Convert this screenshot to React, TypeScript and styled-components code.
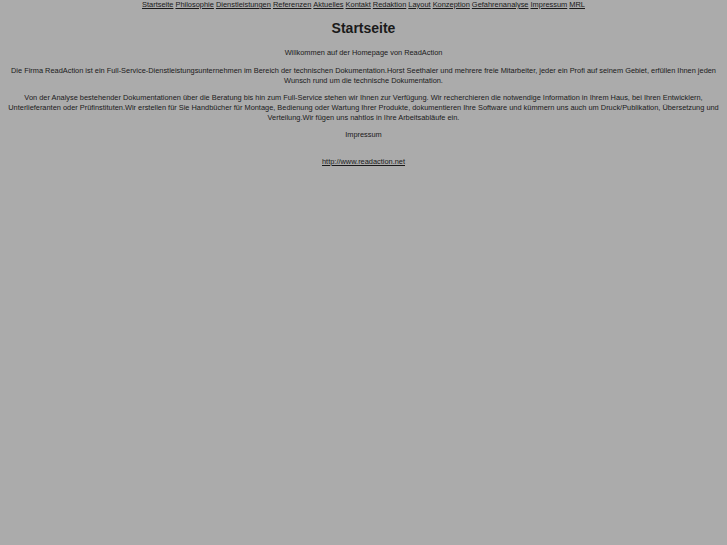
import React from 'react';
import styled, { createGlobalStyle } from 'styled-components';

const Global = createGlobalStyle`
  html, body {
    margin: 0;
    padding: 0;
    background: #ababab;
  }
  body {
    font-family: "Liberation Sans", Arial, sans-serif;
    color: #1a1a1a;
  }
`;

const Page = styled.div`
  display: flex;
  flex-direction: column;
  align-items: center;
  text-align: center;
  padding: 0 4px;
`;

const Nav = styled.nav`
  font-size: 7.45px;
  line-height: 9px;
  display: flex;
  gap: 2px;
`;

const NavLink = styled.a`
  color: #1a1a1a;
  text-decoration: underline;
`;

const Title = styled.h1`
  font-size: 14px;
  font-weight: bold;
  margin: 12px 0 12px;
  line-height: 15px;
`;

const Text = styled.p<{ $gap?: number }>`
  font-size: 7.4px;
  line-height: 10px;
  margin: 0 0 ${p => p.$gap ?? 7}px;
`;

const Link = styled.a`
  color: #1a1a1a;
  font-size: 7.4px;
  text-decoration: underline;
`;

const items = [
  'Startseite', 'Philosophie', 'Dienstleistungen', 'Referenzen', 'Aktuelles', 'Kontakt',
  'Redaktion', 'Layout', 'Konzeption', 'Gefahrenanalyse', 'Impressum', 'MRL',
];

export default function App() {
  return (
    <>
      <Global />
      <Page>
        <Nav>
          {items.map(i => (
            <NavLink key={i} href="#">{i}</NavLink>
          ))}
        </Nav>
        <Title>Startseite</Title>
        <Text $gap={8}>Willkommen auf der Homepage von ReadAction</Text>
        <Text>
          Die Firma ReadAction ist ein Full-Service-Dienstleistungsunternehmen im Bereich der technischen Dokumentation.Horst Seethaler und mehrere freie Mitarbeiter, jeder ein Profi auf seinem Gebiet, erfüllen Ihnen jeden Wunsch rund um die technische Dokumentation.
        </Text>
        <Text>
          Von der Analyse bestehender Dokumentationen über die Beratung bis hin zum Full-Service stehen wir Ihnen zur Verfügung. Wir recherchieren die notwendige Information in Ihrem Haus, bei Ihren Entwicklern, Unterlieferanten oder Prüfinstituten.Wir erstellen für Sie Handbücher für Montage, Bedienung oder Wartung Ihrer Produkte, dokumentieren Ihre Software und kümmern uns auch um Druck/Publikation, Übersetzung und Verteilung.Wir fügen uns nahtlos in Ihre Arbeitsabläufe ein.
        </Text>
        <Text $gap={17}>Impressum</Text>
        <Link href="#">http://www.readaction.net</Link>
      </Page>
    </>
  );
}
